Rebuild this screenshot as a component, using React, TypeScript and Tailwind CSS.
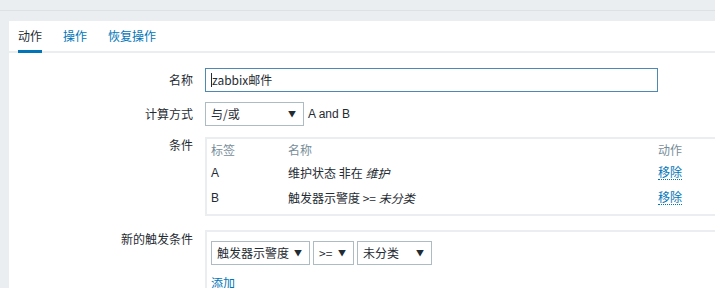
import React from 'react';

const font = { fontFamily: '"Noto Sans CJK SC", "Liberation Sans", sans-serif' };

const Select: React.FC<{ label: string; width: string }> = ({ label, width }) => (
  <div className={`flex h-[24px] items-center justify-between border border-[#acbbc4] bg-white pl-[5px] pr-[7px] text-[12px] text-[#1f2c33] ${width}`}>
    <span>{label}</span>
    <span className="text-[8px] leading-none text-[#1f2c33]">▼</span>
  </div>
);

const Row: React.FC<{ label: string; children: React.ReactNode; className?: string }> = ({ label, children, className }) => (
  <div className={`flex ${className ?? ''}`}>
    <div className="w-[184px] shrink-0 text-right text-[12px] text-[#1f2c33]">{label}</div>
    <div className="ml-[12px] flex-1">{children}</div>
  </div>
);

export default function App() {
  return (
    <div className="h-[288px] w-[715px] overflow-hidden bg-[#ebeef0]" style={font}>
      <div className="h-[11px] overflow-hidden border-b border-[#dce1e4]">
        <div className="mt-[-21px] pl-[15px] text-[16px] text-[#3d6d8f]">动作</div>
      </div>
      <div className="ml-[9px] mt-[10px] h-[300px] w-[720px] bg-white">
        <div className="flex h-[32px] border-b-2 border-[#ebeef0] pl-[9px] text-[12px]">
          <div className="-mb-[2px] flex items-center border-b-[3px] border-[#0275b8] text-[#1f2c33]">
            <span>动作</span>
          </div>
          <div className="ml-[21px] flex items-center text-[#0275b8]">操作</div>
          <div className="ml-[21px] flex items-center text-[#0275b8]">恢复操作</div>
        </div>

        <div className="pt-[15px]">
          <Row label="名称" className="items-center">
            <div className="flex h-[24px] w-[453px] items-center border border-[#4f88b3] pl-[5px] text-[12px] text-[#1f2c33]">
              <span className="h-[14px] w-px bg-[#1f2c33]" />
              <span>zabbix邮件</span>
            </div>
          </Row>

          <Row label="计算方式" className="mt-[10px] items-center">
            <div className="flex items-center gap-[4px]">
              <Select label="与/或" width="w-[99px]" />
              <span className="text-[12px] text-[#1f2c33]" style={{ fontFamily: '"Liberation Sans", sans-serif' }}>A and B</span>
            </div>
          </Row>

          <Row label="条件" className="mt-[10px] items-start">
            <div className="mt-[1px] h-[79px] w-[520px] border-2 border-[#ebeef0] px-[4px] text-[12px]">
              <div className="flex h-[21px] items-center text-[#768d99]">
                <span className="w-[77px]">标签</span>
                <span className="w-[370px]">名称</span>
                <span>动作</span>
              </div>
              <div className="flex h-[25px] items-center text-[#1f2c33]">
                <span className="w-[77px]" style={{ fontFamily: '"Liberation Sans", sans-serif' }}>A</span>
                <span className="w-[370px]">维护状态 非在 <i>维护</i></span>
                <span className="border-b border-dotted border-[#0275b8] leading-[14px] text-[#0275b8]">移除</span>
              </div>
              <div className="flex h-[25px] items-center text-[#1f2c33]">
                <span className="w-[77px]" style={{ fontFamily: '"Liberation Sans", sans-serif' }}>B</span>
                <span className="w-[370px]">触发器示警度 &gt;= <i>未分类</i></span>
                <span className="border-b border-dotted border-[#0275b8] leading-[14px] text-[#0275b8]">移除</span>
              </div>
            </div>
          </Row>

          <Row label="新的触发条件" className="mt-[14px] items-start">
            <div className="h-[80px] w-[520px] border-2 border-[#ebeef0] px-[4px] pt-[9px]">
              <div className="flex gap-[3px]">
                <Select label="触发器示警度" width="w-[99px]" />
                <Select label=">=" width="w-[41px]" />
                <Select label="未分类" width="w-[75px]" />
              </div>
              <div className="mt-[9px] text-[12px] text-[#0275b8]">添加</div>
            </div>
          </Row>
        </div>
      </div>
    </div>
  );
}
